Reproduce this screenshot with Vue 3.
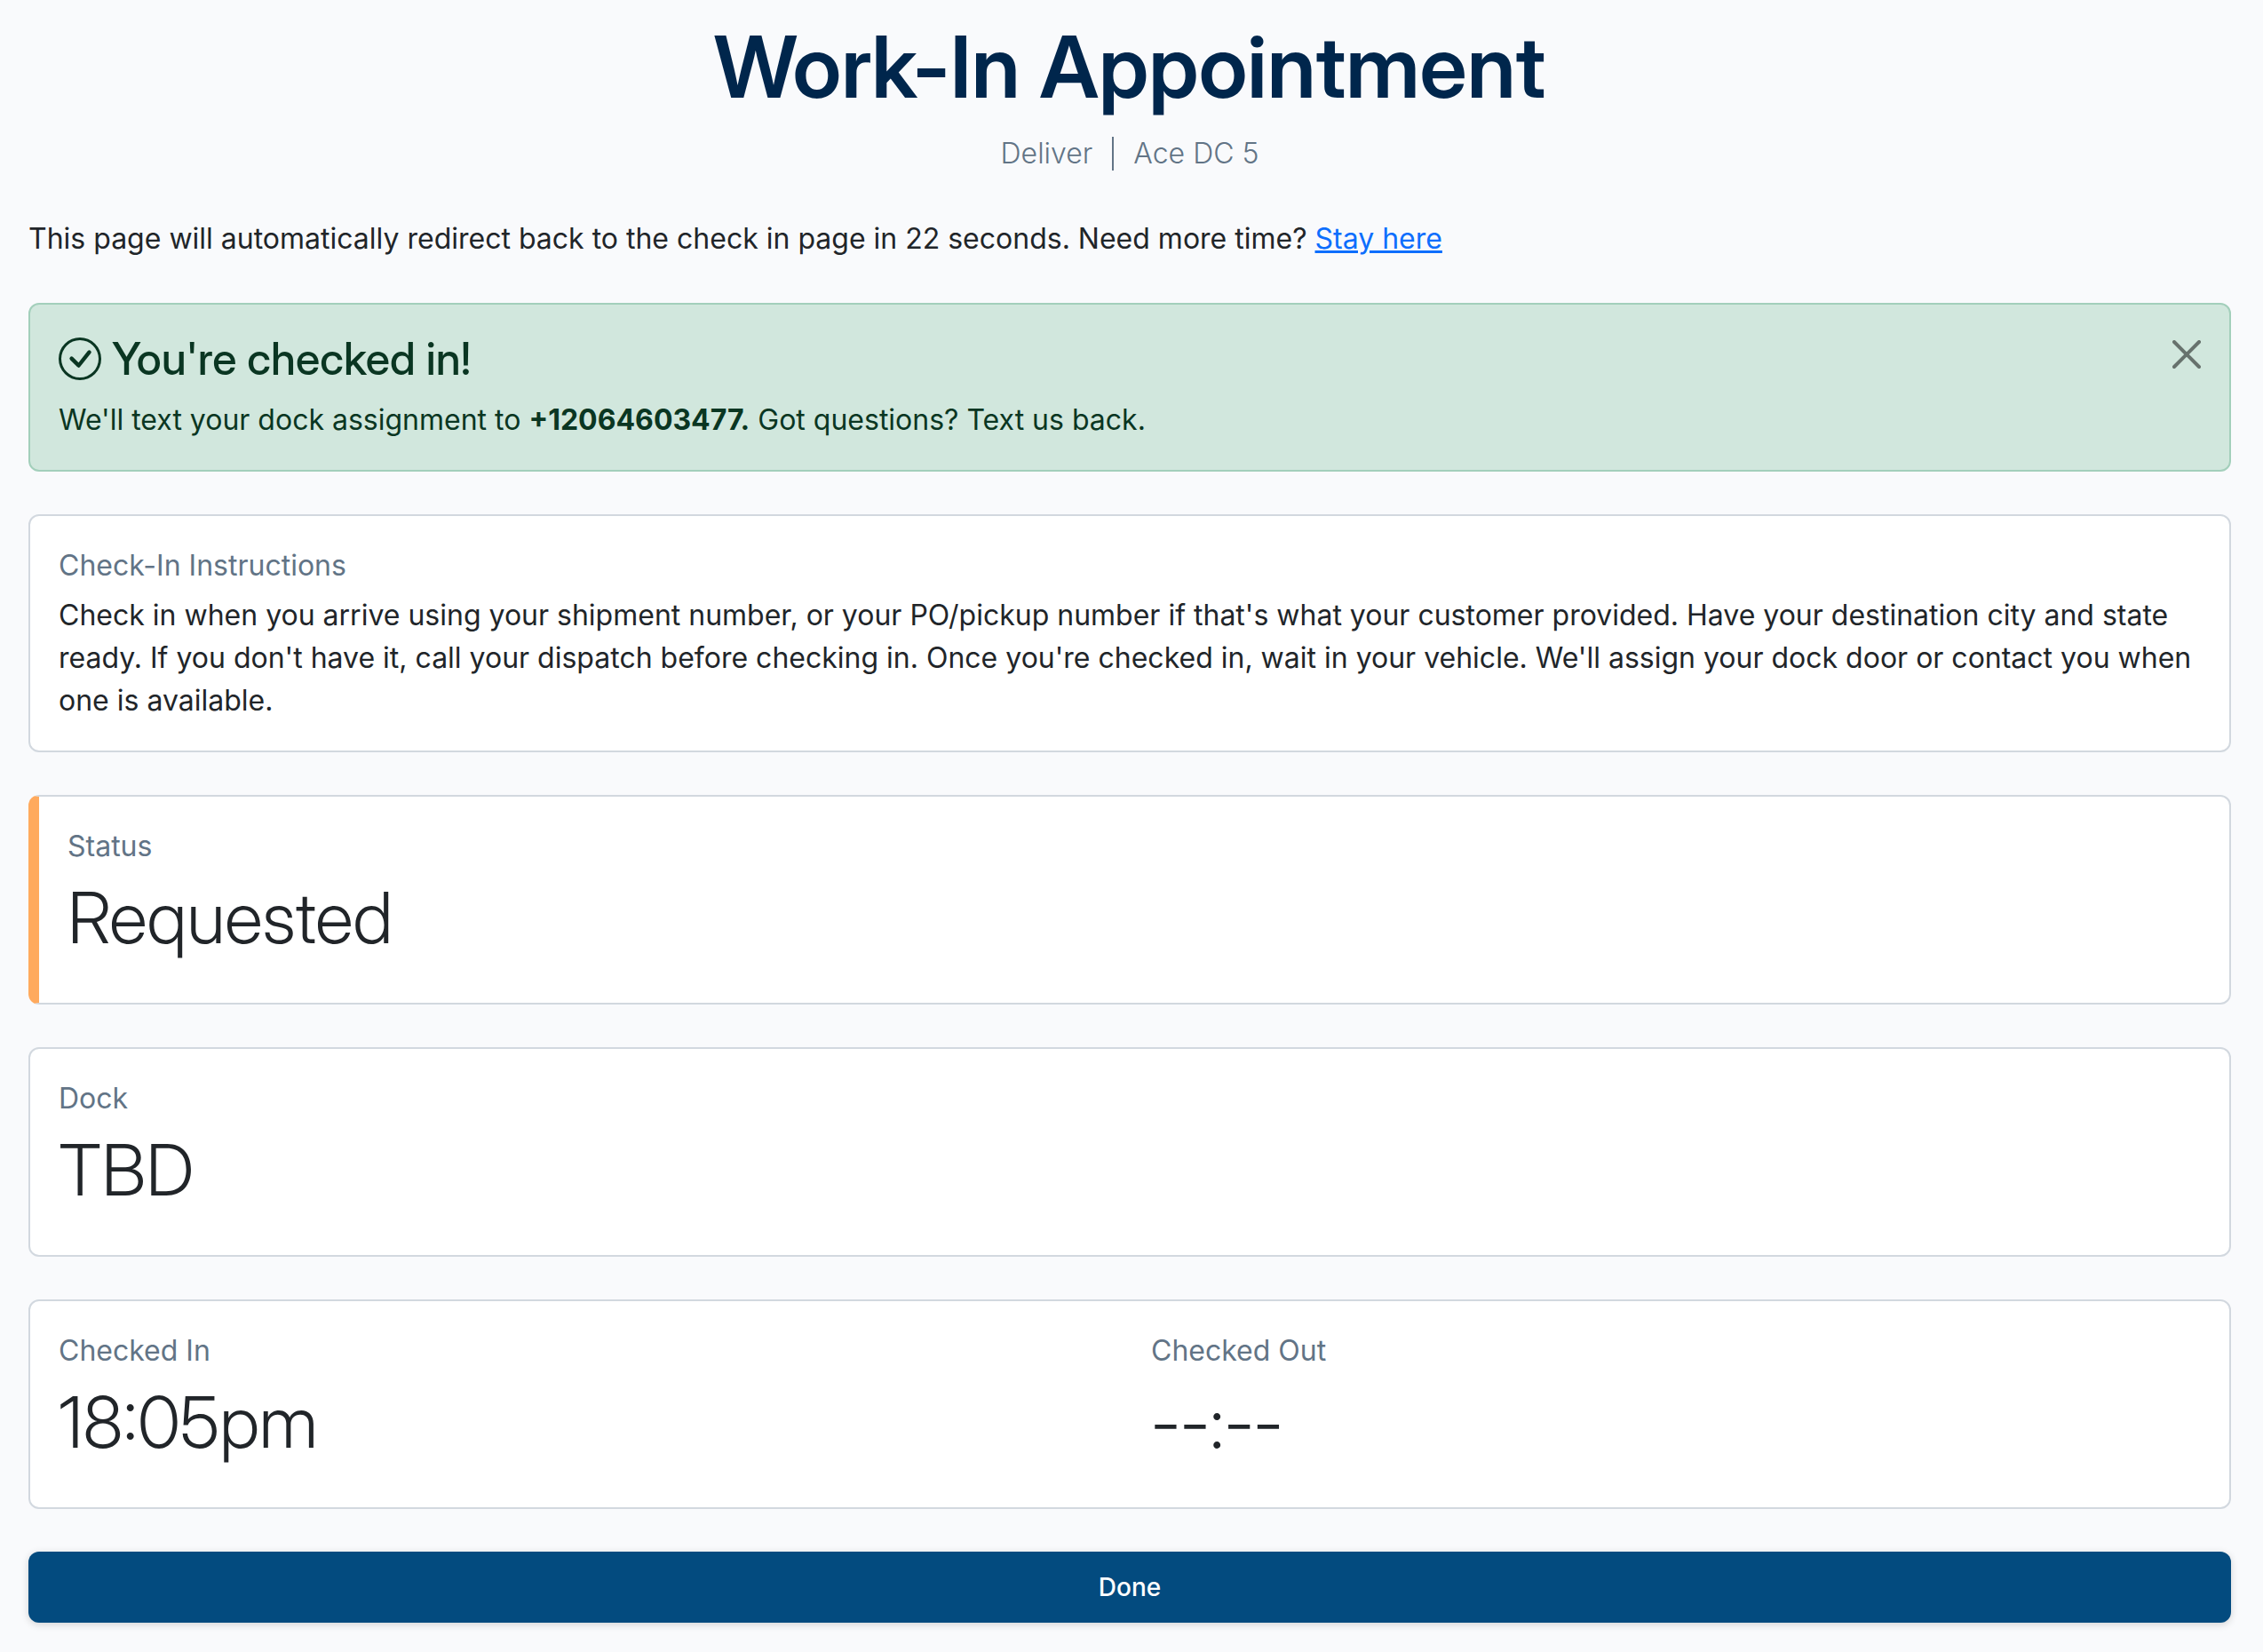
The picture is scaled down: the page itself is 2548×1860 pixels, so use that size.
<script setup>
import { ref } from 'vue'

const alertOpen = ref(true)
const seconds = ref(22)
</script>

<template>
  <main class="page">
    <header class="header">
      <h1 class="title">Work-In Appointment</h1>
      <div class="subtitle">
        <span>Deliver</span>
        <span class="rule"></span>
        <span>Ace DC 5</span>
      </div>
    </header>

    <p class="redirect">
      This page will automatically redirect back to the check in page in {{ seconds }} seconds. Need more time?
      <a href="#">Stay here</a>
    </p>

    <section v-if="alertOpen" class="alert" role="alert">
      <div>
        <h2 class="alert-title">
          <svg class="check" viewBox="0 0 16 16" fill="currentColor" aria-hidden="true">
            <path d="M8 15A7 7 0 1 1 8 1a7 7 0 0 1 0 14m0 1A8 8 0 1 0 8 0a8 8 0 0 0 0 16" />
            <path d="M10.97 4.97a.235.235 0 0 0-.02.022L7.477 9.417 5.384 7.323a.75.75 0 0 0-1.06 1.06L6.97 11.03a.75.75 0 0 0 1.079-.02l3.992-4.99a.75.75 0 0 0-1.071-1.05" />
          </svg>
          <span>You're checked in!</span>
        </h2>
        <p>We'll text your dock assignment to <strong>+12064603477.</strong> Got questions? Text us back.</p>
      </div>
      <button class="close" type="button" aria-label="Close" @click="alertOpen = false">
        <svg viewBox="0 0 16 16" aria-hidden="true">
          <path d="M.293.293a1 1 0 0 1 1.414 0L8 6.586 14.293.293a1 1 0 1 1 1.414 1.414L9.414 8l6.293 6.293a1 1 0 0 1-1.414 1.414L8 9.414l-6.293 6.293a1 1 0 0 1-1.414-1.414L6.586 8 .293 1.707a1 1 0 0 1 0-1.414" />
        </svg>
      </button>
    </section>

    <section class="card">
      <h2 class="label">Check-In Instructions</h2>
      <p>
        Check in when you arrive using your shipment number, or your PO/pickup number if that's what your customer
        provided. Have your destination city and state ready. If you don't have it, call your dispatch before checking
        in. Once you're checked in, wait in your vehicle. We'll assign your dock door or contact you when one is
        available.
      </p>
    </section>

    <section class="card card-status">
      <h2 class="label">Status</h2>
      <p class="value">Requested</p>
    </section>

    <section class="card">
      <h2 class="label">Dock</h2>
      <p class="value">TBD</p>
    </section>

    <section class="card times">
      <div>
        <h2 class="label">Checked In</h2>
        <p class="value">18:05pm</p>
      </div>
      <div>
        <h2 class="label">Checked Out</h2>
        <p class="value">--:--</p>
      </div>
    </section>

    <button class="done" type="button">Done</button>
  </main>
</template>

<style>
body {
  margin: 0;
  background: #f9fafc;
}
</style>

<style scoped>
.page {
  display: flex;
  flex-direction: column;
  gap: 48px;
  padding: 18px 36px 32px 32px;
  font-family: Inter, "Liberation Sans", sans-serif;
  font-size: 32px;
  line-height: 48px;
  color: #212529;
}

h1,
h2,
p {
  margin: 0;
}

.header {
  display: flex;
  flex-direction: column;
  align-items: center;
  gap: 16px;
}

.title,
.alert-title,
.value {
  font-family: "Inter Display", Inter, "Liberation Sans", sans-serif;
}

.title {
  font-size: 96px;
  line-height: 115px;
  font-weight: 600;
  color: #00264c;
}

.subtitle {
  display: flex;
  align-items: center;
  gap: 22px;
  font-weight: 300;
  color: #627486;
}

.rule {
  width: 2px;
  height: 38px;
  background: #627486;
}

.redirect a {
  color: #0d6efd;
}

.alert {
  display: flex;
  justify-content: space-between;
  align-items: flex-start;
  padding: 32px;
  border: 2px solid #a3cfbb;
  border-radius: 12px;
  background: #d1e7dd;
  color: #0a3622;
}

.alert-title {
  display: flex;
  align-items: center;
  gap: 12px;
  margin-bottom: 16px;
  font-size: 50px;
  line-height: 58px;
  font-weight: 500;
}

.check {
  width: 48px;
  height: 48px;
}

strong {
  font-weight: 700;
}

.close {
  display: flex;
  margin-top: 8px;
  padding: 0;
  border: 0;
  background: none;
  opacity: 0.5;
  cursor: pointer;
}

.close svg {
  width: 32px;
  height: 32px;
  fill: #000;
}

.card {
  padding: 32px;
  border: 2px solid #d2d8df;
  border-radius: 12px;
  background: #fff;
}

.card-status {
  border-left: 12px solid #ffaa5e;
}

.label {
  margin-bottom: 8px;
  font-size: 32px;
  line-height: 48px;
  font-weight: 400;
  color: #627486;
}

.value {
  margin-bottom: 16px;
  font-size: 80px;
  line-height: 96px;
  font-weight: 300;
}

.times {
  display: grid;
  grid-template-columns: 1fr 1fr;
  gap: 48px;
}

.done {
  height: 80px;
  border: 0;
  border-radius: 12px;
  background: #034b7f;
  box-shadow: 0 2px 8px rgba(0, 0, 0, 0.16);
  font-family: inherit;
  font-size: 28px;
  line-height: 42px;
  font-weight: 500;
  color: #fff;
  cursor: pointer;
}
</style>
